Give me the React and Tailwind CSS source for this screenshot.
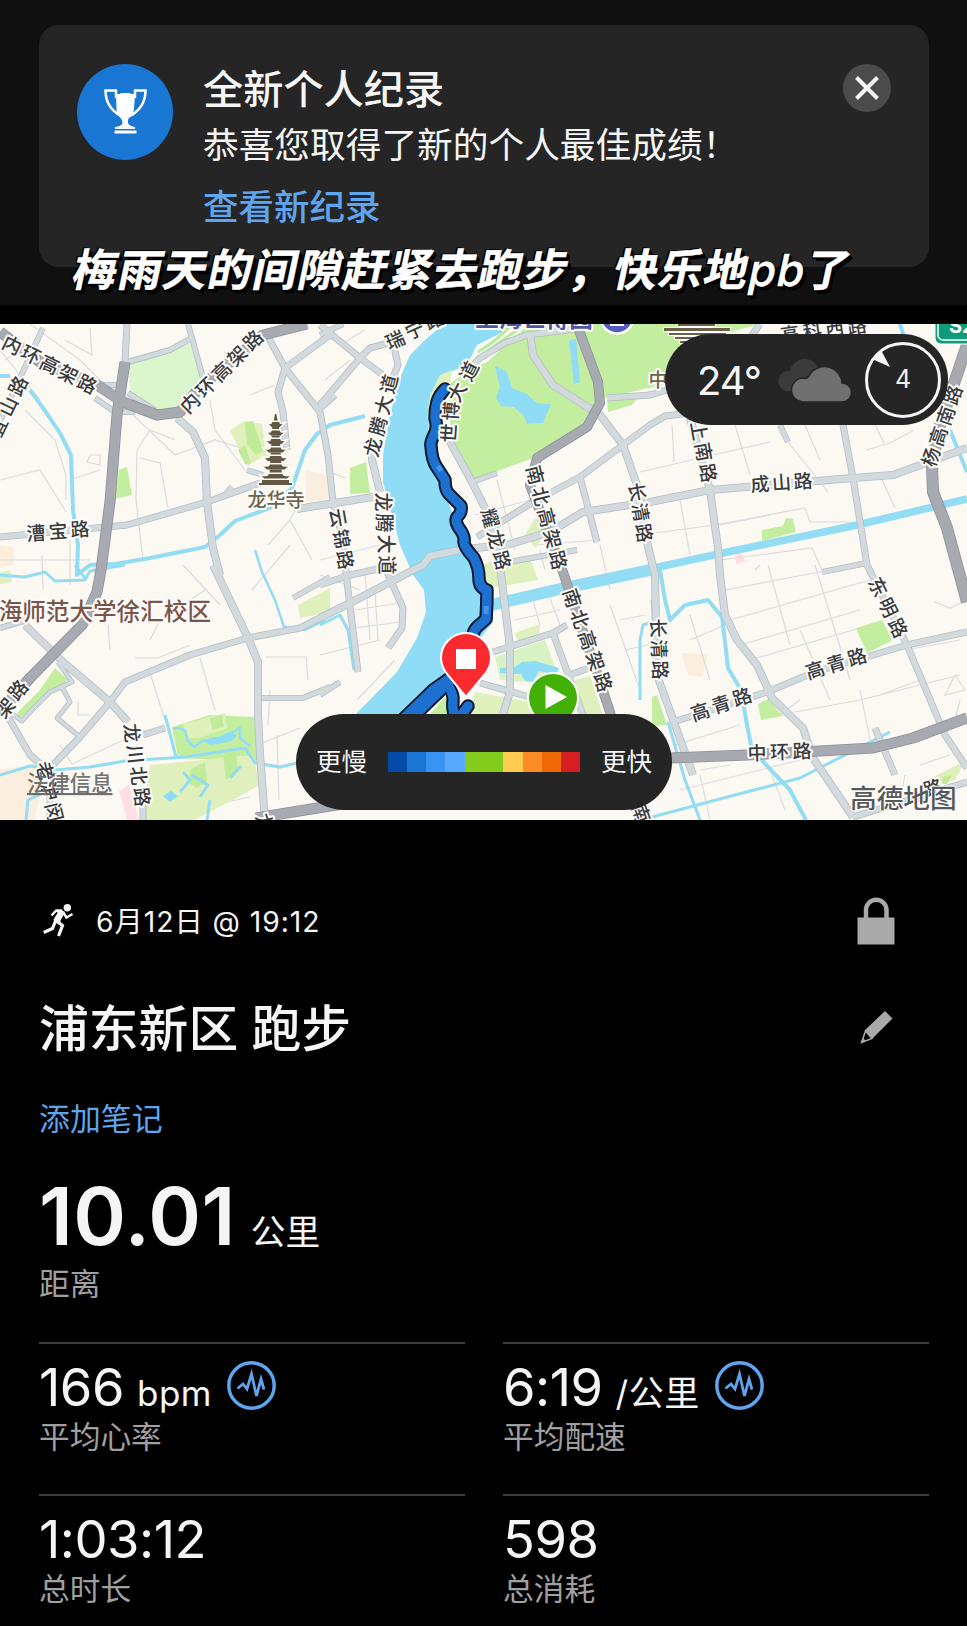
import { Fragment } from 'react';

const FONT = "font-['Inter','Noto_Sans_CJK_SC',sans-serif]";

const PARKS = [
    '119,470 127,467 132,495 115,499',
    '350,468 366,462 370,493 350,494',
    '520,332 487,362 466,372 448,385 452,445 474,480 533,458 583,428 592,412 604,398 667,384 684,345 760,324 530,324',
    '607,399 640,395 632,405 608,412',
    '762,530 783,526 786,518 793,519 796,532 762,541',
    '856,628 882,620 893,640 867,653',
    '652,697 657,695 667,725 652,726',
    '758,704 768,699 783,716 761,720',
    '40,690 55,668 68,680 20,718 17,713',
    '172,727 210,715 254,717 258,762 178,758',
    '425,720 445,697 452,720',
];

const PALE_PARKS = [
    '230,430 245,421 262,424 266,455 247,466',
    '298,605 330,588 330,612 300,618',
    '183,724 225,713 227,728 200,738 188,738',
    '150,765 253,755 260,785 195,820 143,820',
    '480,566 500,558 530,558 538,580 490,588',
    '525,535 535,518 548,530 535,548',
    '515,633 540,624 539,635 518,642',
    '475,692 530,702 533,715 470,715',
    '575,680 590,676 603,715 580,715',
    '923,782 965,761 955,780 932,784',
    '0,573 10,570 12,582 0,584',
    '430,395 440,375 452,370 450,385 438,400 432,425 427,418',
];

const SAND = ['306,470 330,476 330,499 306,502', '0,545 13,547 14,565 0,568', '0,770 45,762 35,820 0,820', '681,653 708,654 702,677 688,675'];

const STREAMS = [
    ['M0 376H10 M30 390 Q45 410 60 433 L71 455 73 510 78 545 77 575 90 565 115 564 150 558 205 547 220 535 235 521 270 508 292 488 305 450 317 434 330 425 365 416', 4],
    ['M0 575 25 577 45 572 55 581 85 580 90 571 M75 565 85 578 M90 571 125 565', 3],
    ['M255 550 262 572 M262 572 275 600 284 627 305 630 325 620', 2.5],
    ['M0 775 30 766 55 770 90 767 125 761 185 757 245 748 255 763 280 767 310 760', 3],
    ['M165 715 176 757 M26 820 28 800 60 785', 3],
    ['M320 625 340 615 348 630 354 670', 3],
    ['M660 570 665 600 670 620 685 605 708 600 722 617 726 650 728 668 741 690 747 725 752 750 790 790 806 820', 4],
    ['M652 600 656 660 M668 722 685 780 700 820', 3],
    ['M652 817 735 795 800 778 890 732', 3],
    ['M900 324 905 340 M950 430 967 472', 4],
    ['M640 640 643 625 651 622 M640 700V640', 3],
    ['M180 792 190 780 183 772 M200 797 208 785 192 775 M207 820 210 800 M230 778 241 766', 3],
];

const LANES = [
    'M30 324 80 360 110 390 M65 340 92 355 90 328 M5 360 20 350 60 365 M0 350 40 400',
    'M70 480 100 470 M0 480 40 470 66 512 M25 410 55 440 66 475 66 500 M42 555 43 590 M70 585V540 M0 560 90 560',
    'M137 450 150 430 175 440 M140 458 160 463 168 508 M130 412 175 455 215 440 268 456 M137 450 136 500 143 560',
    'M210 400 215 430 245 470 M250 395 275 385 M252 590 290 545 M268 545 290 520 312 560 M290 520 298 505',
    'M150 640 160 620 205 590 M135 658 158 658 190 645 M110 650 108 625 M183 565 220 605 M200 658 215 710 M150 673 165 720',
    'M60 745 72 764 145 730 M265 657 306 657 308 680 M270 690 268 725 M262 743 300 728 M212 790 265 775 M180 812 250 797 M277 735 279 800',
    'M320 575 360 590 M355 610 400 603 M355 628 400 622 M320 655 380 640 M375 590 378 640 M357 700 395 660 M365 572 370 640',
    'M320 560 380 545 M325 470 345 478 M325 380 350 360 M340 345 365 330 M540 550 545 570 M450 430 480 418 497 473',
    'M497 480 515 550 M475 515 530 500 M535 545 600 540 M600 545 610 590 M515 600 560 590 M530 590 540 625 M545 585 560 625 M515 620 560 610',
    'M590 345 645 335 M595 358 650 350 M605 330 612 372 M615 328 622 380 M630 327 637 380',
    'M640 472 700 458 770 442 M672 425 674 462 M735 425 750 475 M680 500 690 555 M640 535 715 525 805 508 M805 508 810 522 850 522',
    'M720 525 770 515 M788 442 828 492 M805 425 820 460 M875 425 885 445 M880 475 895 508 M866 450 890 443 914 430 M720 560 812 548 822 570',
    'M768 565 790 645 M815 565 850 680 M725 590 830 570 M730 620 870 580 M740 645 860 610 M750 660 870 625 M690 615 710 680 M690 640 725 625',
    'M675 745 740 725 M795 712 860 700 960 675 M800 630 830 700 M860 690 870 740 M680 790 820 755 M700 770 730 765 M880 695 920 680 M905 650 960 640',
    'M955 675 965 690 945 695Z M960 700 955 720 M700 775 710 820 M905 775 900 800 M770 770 785 810 M920 765 950 755 M780 715 800 700 M935 602 950 608 967 600',
    'M610 605 640 690 M620 620 645 615 M625 650 648 645 M540 715 600 705 M760 565 755 570 M90 455 100 455 100 465 87 462Z M78 702V715H90',
];

const ROADS = [
    ['M127 324 125 362', 6],
    ['M43 328 20 378 -2 425', 5],
    ['M128 362 170 350 192 338 188 324 M192 338 203 378', 5],
    ['M70 373 97 385 117 385 M95 398 115 412 135 412 M128 393 155 410', 5],
    ['M177 418 193 432 205 458 207 502 213 548 220 575 M213 565 248 638 258 662 258 715 260 755 265 820', 7],
    ['M0 537 127 525 207 502 260 483', 6],
    ['M247 470 263 475 M225 495 232 487', 5],
    ['M267 335 285 368 320 412 328 455 333 502 342 535 348 590 358 672', 6],
    ['M330 335 285 368 278 392 283 412 287 450 M320 408 335 395', 6],
    ['M320 325 360 358 383 375 M320 405 360 358 370 348 393 342 398 365 387 392', 6],
    ['M320 335 343 324', 5],
    ['M372 445 372 460 380 492 M297 509 373 497', 7],
    ['M320 618 350 603 423 565 430 556 465 549 507 545 550 532 583 512 650 502 710 490 853 478 893 475 967 448', 7],
    ['M477 537 533 502 580 477 623 445 650 425 665 416 690 413', 6],
    ['M580 477 597 542', 6],
    ['M530 332 533 355 553 385 600 415 623 445 637 485 647 542 655 575 657 675 693 775', 7],
    ['M470 368 480 358 505 343 527 335 583 328', 6],
    ['M607 398 650 395 667 390 M745 345 760 324', 6],
    ['M448 438 472 482 487 512 500 565 510 648 510 692 503 714', 7],
    ['M472 482 497 473 M503 563 577 550', 5],
    ['M320 585 350 575 383 568 M387 572 403 608 402 628 388 648', 6],
    ['M320 695 340 682', 5],
    ['M493 652 553 633 567 625 M553 633 583 715 M570 675 597 665', 6],
    ['M480 683 533 698', 6],
    ['M690 418 710 490 718 548 720 575 725 615 737 640 757 665 772 698 803 728 813 758 853 817', 7],
    ['M843 425 853 478 867 565 907 645 945 735 967 768', 6],
    ['M780 425 788 442 M822 572 867 563', 5],
    ['M673 722 767 692 815 672 907 645 967 632', 6],
    ['M875 728 895 775 M853 817 967 782', 6],
    ['M25 625 63 662 110 702 128 722', 7],
    ['M110 702 125 682 190 655 248 638 300 628 330 613', 6],
    ['M110 702 80 737 53 765', 6],
    ['M7 715 30 755 50 772 50 820 M143 735 165 728 M143 800V820', 6],
    ['M262 698 303 698 330 687 M293 598 330 577', 5],
    ['M7 710 22 721 30 712 50 692 72 682 58 662 M62 687 70 702 57 718 80 737', 4],
    ['M0 628 27 620', 5],
];

const HIGHWAYS = [
    ['M125 362 117 415 110 502 101 570 97 592 82 625 30 678 0 712', 10],
    ['M0 332 40 362 97 385 123 402 157 415 180 412 200 387 263 335 307 324', 10],
    ['M577 325 598 382 600 403 587 427 537 458 530 485 563 572 610 712 640 820', 9],
    ['M967 345 940 425 932 465 933 492 947 528 967 602', 11],
    ['M256 818 330 806 400 795 M670 758 747 755 873 748 913 738 967 718', 10],
];

// text, first glyph centre, last glyph centre, glyph angle
const LABELS = [
    ['内环高架路', 12, 345, 87, 384, 26],
    ['内环高架路', 190, 403, 253, 340, -45],
    ['宜山路', -2, 427, 18, 386, -64],
    ['漕宝路', 36, 533, 80, 529, -4],
    ['瑞宁路', 395, 340, 434, 320, -24],
    ['龙腾大道', 373, 447, 389, 384, -76],
    ['龙腾大道', 383, 502, 387, 565, 90],
    ['云锦路', 338, 518, 345, 560, 80],
    ['耀龙路', 490, 518, 502, 560, 75],
    ['南北高架路', 535, 475, 558, 560, 76],
    ['南北高架路', 572, 598, 603, 682, 72],
    ['长清路', 637, 492, 644, 533, 80],
    ['长清路', 658, 628, 660, 670, 88],
    ['上南路', 699, 431, 708, 473, 80],
    ['成山路', 760, 484, 803, 481, -4],
    ['杨高南路', 931, 457, 953, 395, -71],
    ['东明路', 878, 587, 898, 628, 64],
    ['高青路', 815, 670, 857, 657, -17],
    ['高青路', 700, 712, 742, 697, -18],
    ['中环路', 757, 753, 802, 751, -2],
    ['龙川北路', 132, 733, 142, 797, 84],
    ['架路', 5, 708, 18, 690, -50],
    ['老沪闵', 45, 771, 54, 812, 76],
    ['高科西路', 790, 334, 857, 326, -8],
    ['龙', 265, 823, 265, 823, 70],
    ['南', 641, 813, 641, 813, 70],
    ['路', 933, 788, 933, 788, -16],
];

// drawn above the route line
const RIVERSIDE_LABELS = [
    ['世博', 449, 433, 451, 411, -86],
    ['大道', 457, 392, 469, 371, -62],
];

const ROUTE = [
    'M445 389Q439 395 437 402T435 418Q438 427 434 435T431 446Q432 460 436 466T445 480Q445 490 449 494T461 506Q462 512 458 516T459 528Q465 536 464 541T474 558Q479 568 479 578T487 590Q487 605 486 619L477 627Q472 632 473 640L462 670 447 684 410 720',
    'M450 678 433 690 402 720',
    'M447 684Q454 694 453 701T455 718',
    'M468 706 458 720',
];

const PACE = ['bg-[#034ba6]', 'bg-[#1976d5]', 'bg-[#3894f4]', 'bg-[#57a8ff]', 'bg-[#83cb1c]', 'bg-[#83cb1c]', 'bg-[#fdcb50]', 'bg-[#fb8c28]', 'bg-[#ee6806]', 'bg-[#d71f23]'];

function Label({ item }) {
    const [text, x1, y1, x2, y2, angle] = item;
    return [...text].map((char, i) => {
        const t = text.length > 1 ? i / (text.length - 1) : 0;
        return (
            <text key={i} dy="7" textAnchor="middle" transform={`translate(${x1 + (x2 - x1) * t} ${y1 + (y2 - y1) * t}) rotate(${angle})`}>
                {char}
            </text>
        );
    });
}

function Roads({ items, edge, fill }) {
    return (
        <g fill="none" strokeLinejoin="round">
            {items.map(([d, w]) => <path key={d} d={d} stroke={edge} strokeWidth={w + 1} />)}
            {items.map(([d, w]) => <path key={d} d={d} stroke={fill} strokeWidth={w - 0.6} />)}
        </g>
    );
}

function Pagoda() {
    const tiers = [[425, 7], [433.5, 8], [442, 9], [450.5, 10], [459, 11], [467.5, 12], [477, 14]];
    return (
        <g fill="#625843" stroke="#fbf9f2" strokeWidth="3" paintOrder="stroke">
            <path d="M275 414h1.4l2 11h-5.4z" />
            {tiers.map(([y, r]) => (
                <Fragment key={y}>
                    <path d={`M${275.7 - r} ${y - 1}Q${275.7 - r / 2} ${y} ${275.7 - r / 2} ${y - 3}H${275.7 + r / 2}Q${275.7 + r / 2} ${y} ${275.7 + r} ${y - 1}L${275.7 + r - 3} ${y + 2}H${275.7 - r + 3}Z`} />
                    <path d={`M${275.7 - r / 2} ${y + 2}h${r}v4h-${r}z`} stroke="none" />
                </Fragment>
            ))}
            <path d="M262 480h27v3h3v2h-33v-2h3z" />
        </g>
    );
}

function CityMap() {
    return (
        <svg className="block h-[496px] w-full" viewBox="0 324 967 496">
            <rect y="324" width="967" height="496" fill="#fbf9f2" />
            <g fill="#fbeede">{SAND.map(p => <polygon key={p} points={p} />)}</g>
            <path d="M119 791l10-6 10 35h-12z M735 555l6-2 5 9-10 2z" fill="#ffdfe4" />
            <g fill="none" stroke="#dddbe0" strokeWidth="1.2">{LANES.map(d => <path key={d} d={d} />)}</g>
            <path d="M444 324 425 340 410 355 400 378 390 415 383 455 383 482 392 515 400 545 413 575 424 590 426 612 417 638 397 672 357 713 340 730 400 730 407 715 447 678 467 655 493 622 489 585 470 545 453 515 437 472 428 432 432 392 443 375 467 365 477 345 507 330 520 324Z" fill="#8edcf5" />
            <polygon points="495,657 545,640 562,685 500,680" fill="#d9f2c4" />
            <g fill="#c4ee9f">{PARKS.map(p => <polygon key={p} points={p} />)}</g>
            <polygon points="128,364 190,344 202,380 181,407 157,411 130,393" fill="#dbf5cc" />
            <g fill="#dff0bd">{PALE_PARKS.map(p => <polygon key={p} points={p} />)}</g>
            <path d="M245 422l8-1 10 30-7 4-9-10z M238 450l7-5 6 19h-6z M210 718l12-3 2 12-12 3z M190 770l15-8 2 18-10 8-8-5z M223 755l13-3 2 18-12 10z M943 777l9-2-5 9h-5z" fill="#c0eb98" />
            <path d="M495 366 507 372 512 388 527 394 537 403 551 404 543 423 527 424 524 416 514 407 501 406 496 398 500 387Z M569 340l7-1 4 43-6 2z M800 326h18l-8 9z" fill="#8edcf5" />
            <path d="M204 741q6-4 14-4l12-5 7 3-5 6-14 3-8 1z M500 668l15-1 7-5 13-1 24 7-2 7-18-4-6 11-8-1-4-7-21-1z M163 796l8-5 7 5-8 6z" fill="#8edcf5" />
            <g fill="none" stroke="#92dcf4" strokeLinejoin="round">
                {STREAMS.map(([d, w]) => <path key={d} d={d} strokeWidth={w} />)}
                <path d="M173 729q8-2 12 2l3 10 6 6 8-6 8-1M228 735l12-7v10l10 8" strokeWidth="2.500" />
                <path d="M487 606 560 589 650 570" strokeWidth="12" />
                <path d="M640 571 723 553 857 525 967 499" strokeWidth="7.500" />
                <path d="M478 352q20-12 32-26M482 355l35-25" stroke="#b9ea9d" strokeWidth="3" />
            </g>
            <Roads items={ROADS} edge="#b3bec5" fill="#d2dadd" />
            <Roads items={HIGHWAYS} edge="#8d9099" fill="#a8aab2" />

            <Pagoda />
            <g fill="#6c6049" stroke="#fff" strokeWidth="2" paintOrder="stroke">
                <path d="M678 324h37v2h-37zM664 328h66v3h-66zM669 333h57v2h-57zM675 337h45v2h-45zM680 341h35v2h-35zM684 345h27v2h-27z" />
            </g>

            <g className={`${FONT} text-[19px] font-medium`} fill="#393b3f" stroke="#fdfcf8" strokeWidth="4" strokeLinejoin="round" paintOrder="stroke">
                {LABELS.map((item, i) => <Label key={i} item={item} />)}
                <text x="276" y="507" textAnchor="middle" fill="#6e6250">龙华寺</text>
                <text x="658" y="387" textAnchor="middle" fill="#6e6250">中</text>
                <text x="211" y="620" textAnchor="end" fill="#7b544b" className="text-[23.6px]">上海师范大学徐汇校区</text>
                <text x="534" y="327" textAnchor="middle" fill="#4c56a5" className="text-[23.5px] font-bold">上海世博园</text>
            </g>
            <circle cx="617" cy="317" r="16.5" fill="#545cc0" stroke="#fff" strokeWidth="2.5" />
            <path d="M610 324h14v2h-14z" fill="#fff" />
            <rect x="935" y="312" width="50" height="32" rx="6" fill="#109b78" stroke="#fff" strokeWidth="1" />
            <rect x="938" y="312" width="50" height="28" rx="5" fill="#109b78" stroke="#fff" strokeWidth="1.5" />
            <text x="949" y="333" fill="#fff" className={`${FONT} text-[20px] font-bold`}>S20</text>

            <text x="27" y="791" fill="#5e6060" fillOpacity="0.9" className={`${FONT} text-[21.4px] font-medium underline underline-offset-4`}>法律信息</text>
            <text x="850" y="808" fill="#56585a" stroke="#fff" strokeWidth="2" paintOrder="stroke" className={`${FONT} text-[26.7px] font-medium`}>高德地图</text>

            <g fill="none" strokeLinecap="round" strokeLinejoin="round">
                {ROUTE.map(d => <path key={d} d={d} stroke="#0a1a30" strokeWidth="13.500" />)}
                {ROUTE.map(d => <path key={d} d={d} stroke="#1d70cf" strokeWidth="9.500" />)}
                <path d="M438 466l3 5M486 606v8" stroke="#4494e8" strokeWidth="5" strokeLinecap="butt" />
            </g>
            <g className={`${FONT} text-[19px] font-medium`} fill="#393b3f" stroke="#fdfcf8" strokeWidth="4" strokeLinejoin="round" paintOrder="stroke">
                {RIVERSIDE_LABELS.map((item, i) => <Label key={i} item={item} />)}
            </g>
            <g stroke="#fff" strokeWidth="2">
                <path d="M466 697 447 674Q441 666 441 658A25 25 0 0 1 491 658Q491 666 485 674Z" fill="#fb2a2f" />
                <path d="M553 738 534 715Q528 706 528 698A25 25 0 0 1 578 698Q578 706 572 715Z" fill="#43b005" />
            </g>
            <path d="M456 649h20v20h-20zM545.5 685l21.500 12-21.500 12z" fill="#fff" />
        </svg>
    );
}

function Weather() {
    return (
        <div className="absolute left-[665px] top-[10px] flex h-[91px] w-[283px] items-center rounded-full bg-[#252525] pl-[32px] text-[#f5f5f5]">
            <span className="mt-[2px] w-[80px] text-[40px] tracking-[-1px]">24°</span>
            <svg className="mt-[2px] h-[44px] w-[76px]" viewBox="0 0 76 44">
                <path d="M10 32a10 10 0 0 1 3-20 15 15 0 0 1 28-4L34 32z" fill="#3b3b3b" />
                <path d="M27 43a12 12 0 0 1-1-24 5 5 0 0 0 6-2 17.500 17.500 0 0 1 33 7 9.500 9.500 0 0 1 0 19z" fill="#707070" stroke="#252525" strokeWidth="1.500" />
            </svg>
            <div className="relative ml-[12px] mt-[1px] flex size-[76px] items-center justify-center rounded-full border-[3px] border-[#f5f5f5] text-[25px]">
                4
                <svg className="absolute left-[4px] top-[5px] h-[20px] w-[20px]" viewBox="0 0 20 20">
                    <path d="M0 9 9 0 18 17z" fill="#f5f5f5" />
                </svg>
            </div>
        </div>
    );
}

function PaceLegend() {
    return (
        <div className="absolute left-[296px] top-[390px] flex h-[96px] w-[376px] items-center justify-between rounded-full bg-[#252525] px-[20px] text-[25.500px] text-[#f5f5f5]">
            <span>更慢</span>
            <div className="flex h-[20px] w-[193px]">
                {PACE.map((color, i) => <div key={i} className={`flex-1 ${color}`} />)}
            </div>
            <span>更快</span>
        </div>
    );
}

function RecordCard() {
    return (
        <div className="relative h-[305px] bg-[#101010] pl-[39px] pr-[38px] pt-[25px]">
            <div className="flex h-[242px] rounded-[20px] bg-[#252525] pl-[38px] pt-[39px]">
                <div className="flex size-[96px] items-center justify-center rounded-full bg-[#1976d2]">
                    <svg className="-mt-[2px] h-[46px] w-[45px]" viewBox="0 0 45 46">
                        <path d="M13 6h4l1-1h9l1 1h4l-1 15q-1 6-5 9-2 2-1 5 1 3 7 4v2H12v-2q7-1 7.500-4 0-3-2-5-4-4-4-9z" fill="#fff" />
                        <path d="M14 2.500H2.500q0 17 15.500 25.500M31 2.500h11.500q0 17-15.500 25.500" fill="none" stroke="#fff" strokeWidth="2.500" />
                        <path d="M13 2v8M32 2v8" stroke="#fff" strokeWidth="2.500" />
                        <path d="M11.500 42.500h22v3h-22z" fill="#fff" />
                    </svg>
                </div>
                <div className="ml-[30px] flex-1 text-[#f5f5f5]">
                    <h1 className="mt-[1px] h-[50px] text-[40.200px] font-medium leading-[50px]">全新个人纪录</h1>
                    <p className="mt-[5px] h-[50px] text-[35.700px] leading-[50px]">恭喜您取得了新的个人最佳成绩！</p>
                    <a className="mt-[13px] block h-[50px] text-[35.500px] font-medium leading-[50px] text-[#5fa5ee]">查看新纪录</a>
                </div>
                <button className="mr-[38px] flex size-[48px] items-center justify-center rounded-full bg-[#4b4b4b]">
                    <svg className="size-[24px]" viewBox="0 0 24 24">
                        <path d="M1.500 1.500l21 21M22.500 1.500l-21 21" stroke="#f5f5f5" strokeWidth="4" />
                    </svg>
                </button>
            </div>
            <p className="absolute left-[74px] top-[240px] -skew-x-12 whitespace-nowrap text-[44px] font-bold leading-[60px] tracking-[1.050px] text-white [-webkit-text-stroke:0.500px_white] [text-shadow:1px_1px_0_#000,2px_2px_0_#000,3px_3px_0_#000,4px_4px_0_#000,-2px_-1px_0_#000,-1px_2px_0_#000]">
                梅雨天的间隙赶紧去跑步，快乐地<span className="font-medium">pb</span>了
            </p>
        </div>
    );
}

function PulseIcon() {
    return (
        <svg className="size-[49px]" viewBox="0 0 49 49" fill="none" stroke="#5fa5ee">
            <circle cx="24.500" cy="24.500" r="22.700" strokeWidth="3.400" />
            <path d="M10.500 27.500l5.500-4.500 4 5 4.500-15 5 22 4.500-17 3 10.500" strokeWidth="2.800" />
        </svg>
    );
}

function Stat({ value, unit, label, pulse }) {
    return (
        <div className="h-[151.500px] border-t-[2.500px] border-[#3e3e3e] pt-[13px]">
            <div className="flex h-[60px] items-center">
                <div className="flex items-baseline">
                    <span className="text-[52.500px] leading-[60px] tracking-[-0.500px]">{value}</span>
                    {unit && <span className="ml-[13px] text-[35px] leading-[40px] tracking-[0.500px]">{unit}</span>}
                </div>
                {pulse && <div className="-mt-[4px] ml-[15px]"><PulseIcon /></div>}
            </div>
            <div className="text-[30.700px] leading-[40px] text-[#a0a0a0]">{label}</div>
        </div>
    );
}

export default function App() {
    return (
        <div className={`h-[1626px] w-[967px] overflow-hidden bg-black text-[#f5f5f5] ${FONT}`}>
            <RecordCard />
            <div className="relative mt-[19px]">
                <CityMap />
                <Weather />
                <PaceLegend />
            </div>

            <div className="pl-[39px] pr-[38px] pt-[51px]">
                <div className="flex h-[100px] items-center">
                    <svg className="ml-[4px] h-[34px] w-[32px]" viewBox="0 0 32 34" fill="none" stroke="#f5f5f5">
                        <circle cx="24.300" cy="3.700" r="3.700" fill="#f5f5f5" stroke="none" />
                        <path d="M13 5.500 18.500 5.500 22 8.500 17.500 16.500 18 19 11.500 19 10.500 15.500 14.500 9z" fill="#f5f5f5" stroke="none" />
                        <path d="M8.500 11.500 13 6.700 19 6.800 M20 8 23.500 13.500 29.500 10" strokeWidth="2.500" />
                        <path d="M14 17.500 19.500 21.500 15.500 32M12.500 17 9.500 24.500.700 28.500" strokeWidth="3.200" />
                    </svg>
                    <span className="ml-[21px] mt-[2px] flex-1 text-[28.300px] tracking-[0.950px]">6月12日 @ 19:12</span>
                    <svg className="-mt-[2px] mr-[34px] h-[49px] w-[38px]" viewBox="0 0 38 49">
                        <path d="M9 24V14a10.200 10.200 0 0 1 20.500 0v10" fill="none" stroke="#a9a9a9" strokeWidth="4.500" />
                        <path d="M.5 21.500h37v27H.5z" fill="#a9a9a9" />
                    </svg>
                </div>
                <div className="flex h-[116px] items-center justify-between">
                    <h2 className="text-[49.800px] font-medium">浦东新区 跑步</h2>
                    <svg className="-mt-[4px] mr-[36px] h-[34px] w-[33px]" viewBox="0 0 33 34">
                        <path d="M25 1l7.500 7.500-20 20-8-8z" fill="#a9a9a9" />
                        <path d="M5.500 21 1.500 32.500 12 28.500z" fill="none" stroke="#a9a9a9" strokeWidth="1.500" />
                        <path d="M1 33l2-5 3 3z" fill="#a9a9a9" />
                    </svg>
                </div>
                <a className="mt-[12px] block text-[30.900px] leading-[40px] text-[#5fa5ee]">添加笔记</a>
                <div className="mt-[28px] flex h-[97px] items-baseline">
                    <span className="text-[80px] font-semibold leading-[97px] tracking-[0.500px]">10.01</span>
                    <span className="ml-[15px] text-[34.700px] leading-[40px]">公里</span>
                </div>
                <div className="text-[30.700px] leading-[40px] text-[#a0a0a0]">距离</div>
                <div className="mt-[38px] grid grid-cols-2 gap-x-[38px]">
                    <Stat value="166" unit="bpm" label="平均心率" pulse />
                    <Stat value="6:19" unit="/公里" label="平均配速" pulse />
                    <Stat value="1:03:12" label="总时长" />
                    <Stat value="598" label="总消耗" />
                </div>
            </div>
        </div>
    );
}
